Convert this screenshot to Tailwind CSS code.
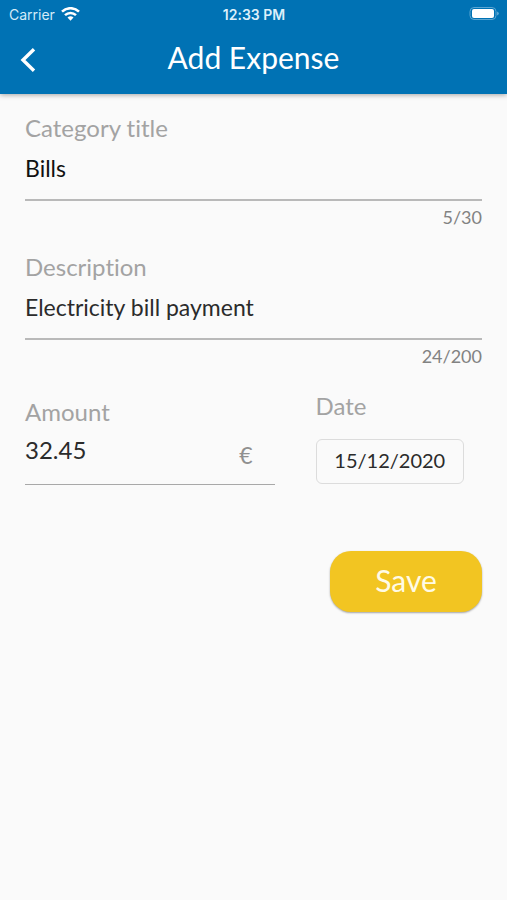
<!DOCTYPE html>
<html lang="en">
<head>
<meta charset="utf-8">
<meta name="viewport" content="width=device-width, initial-scale=1">
<title>Add Expense</title>
<script src="https://cdn.jsdelivr.net/npm/@tailwindcss/browser@4"></script>
</head>
<body class="min-h-screen bg-[#fafafa] font-['Lato','Liberation_Sans',sans-serif] text-[#2b2b2b] [font-variant-ligatures:none]">
<header class="bg-[#0072b4] text-white shadow-[0_1px_5px_rgba(0,0,0,0.35)]">
  <div class="grid h-7 grid-cols-3 items-center pr-2 pl-[9px] font-['Inter','Liberation_Sans',sans-serif] text-[14px]">
    <div class="flex items-center gap-[6px] text-[#d3ebf8]">
      <span>Carrier</span>
      <svg class="h-[15px] w-[19px]" viewBox="0 0 19 15" fill="none" stroke="#fff" stroke-width="2.6" aria-hidden="true">
        <path d="M1 4.600C5.800.1 13.200.1 18 4.600"/>
        <path d="M4 8.100C7.200 5.200 11.800 5.200 15 8.100"/>
        <path d="M6.500 10.500Q9.500 7.900 12.500 10.500L9.500 13.800Z" fill="#fff" stroke="none"/>
      </svg>
    </div>
    <div class="text-center font-semibold text-[#dceffa]">12:33 PM</div>
    <div class="flex justify-end">
      <svg class="h-[14px] w-[30px]" viewBox="0 0 30 14" aria-hidden="true">
        <rect x="1" y="0.500" width="26" height="12" rx="4" fill="none" stroke="#5ba6d2"/>
        <rect x="3" y="2" width="22" height="9" rx="2" fill="#fff"/>
        <path d="M28 4.500Q30 5.500 30 6.500T28 8.500Z" fill="#5ba6d2"/>
      </svg>
    </div>
  </div>
  <div class="grid h-[66px] grid-cols-[56px_1fr_56px] items-center">
    <button type="button" aria-label="Back" class="flex h-14 w-14 items-center justify-center pb-[3px]">
      <svg class="h-6 w-4" viewBox="0 0 16 24" fill="none" stroke="#fff" stroke-width="3.400" aria-hidden="true"><path d="M14 1.300L3 12L14 22.700"/></svg>
    </button>
    <h1 class="pb-2 text-center text-[30px] leading-9">Add Expense</h1>
  </div>
</header>
<main>
  <form class="flex flex-col gap-[26px] px-[25px] pt-5">
    <div class="flex flex-col">
      <label for="category" class="text-[24px] leading-7 text-[#a3a3a3]">Category title</label>
      <input id="category" type="text" maxlength="30" value="Bills" class="h-[59px] w-full border-b-2 border-[#b9b9b9] bg-transparent pb-[6px] text-[23px] text-[#111] outline-none">
      <span class="mt-[6px] text-right text-[18px] leading-5 text-[#828282]">5/30</span>
    </div>
    <div class="flex flex-col">
      <label for="description" class="text-[24px] leading-7 text-[#a3a3a3]">Description</label>
      <input id="description" type="text" maxlength="200" value="Electricity bill payment" class="h-[59px] w-full border-b-2 border-[#b9b9b9] bg-transparent pb-[6px] text-[23px] outline-none">
      <span class="mt-[6px] text-right text-[18px] leading-5 text-[#828282]">24/200</span>
    </div>
    <div class="grid grid-cols-[6fr_4fr] gap-[41px]">
      <div class="flex flex-col pt-[6px]">
        <label for="amount" class="text-[24px] leading-7 text-[#a3a3a3]">Amount</label>
        <div class="flex h-[59px] items-center border-b border-[#a8a8a8] pr-[22px] pb-[10px]">
          <input id="amount" type="text" inputmode="decimal" value="32.45" class="w-full min-w-0 flex-1 bg-transparent text-[24px] outline-none">
          <span class="pt-[10px] text-[23px] leading-6 text-[#909090]">€</span>
        </div>
      </div>
      <div class="flex flex-col">
        <label for="date" class="text-[24px] leading-7 text-[#a3a3a3]">Date</label>
        <button id="date" type="button" class="mt-[19px] mr-[18px] h-[45px] rounded-[6px] border border-[#dcdcdc] pb-1 text-[20px] leading-7">15/12/2020</button>
      </div>
    </div>
    <button type="submit" class="mt-10 h-[61px] w-[152px] self-end rounded-[21px] bg-[#f2c522] pb-1 text-[30px] leading-9 text-[#fffbe6] shadow-[0_1px_2px_rgba(0,0,0,0.35)]">Save</button>
  </form>
</main>
</body>
</html>
